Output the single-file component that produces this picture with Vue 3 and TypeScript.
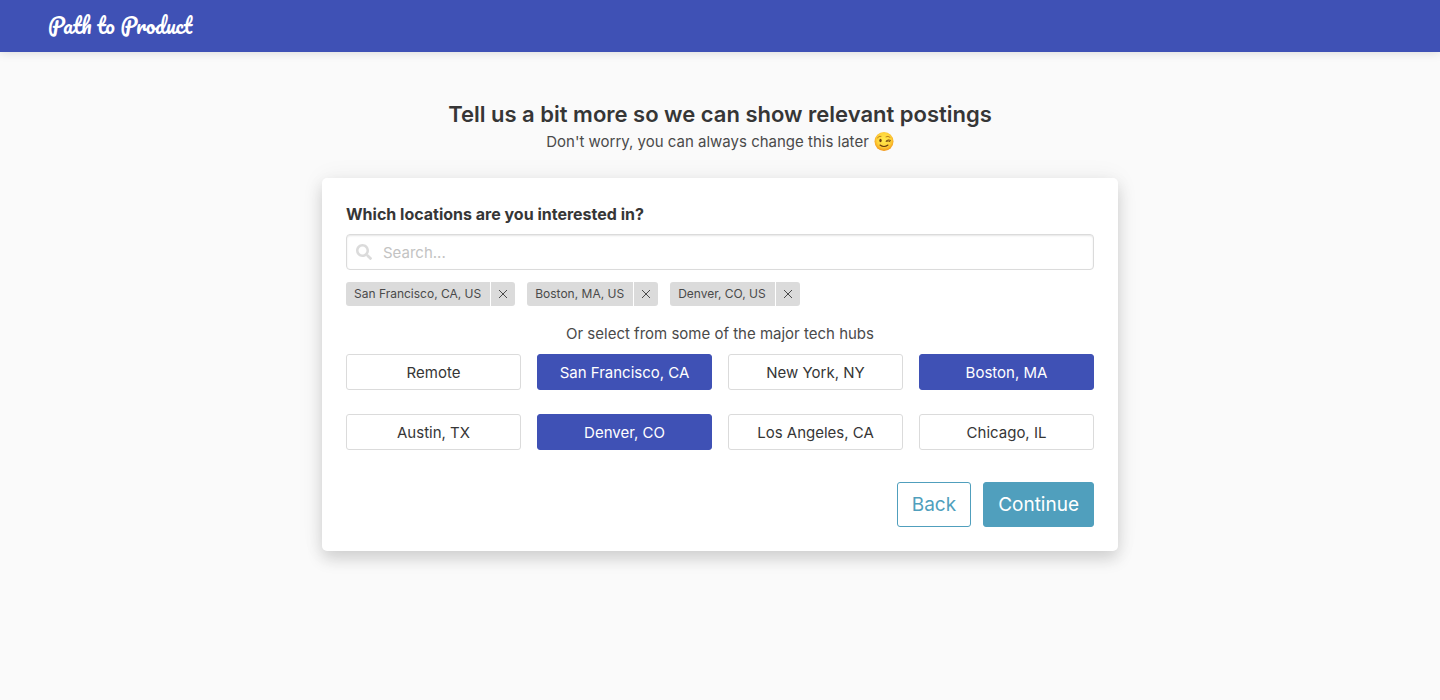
<script setup lang="ts">
import { computed, ref } from 'vue'

interface Place {
  name: string
  tag: string
}

const hubs: Place[] = [
  { name: 'Remote', tag: 'Remote' },
  { name: 'San Francisco, CA', tag: 'San Francisco, CA, US' },
  { name: 'New York, NY', tag: 'New York, NY, US' },
  { name: 'Boston, MA', tag: 'Boston, MA, US' },
  { name: 'Austin, TX', tag: 'Austin, TX, US' },
  { name: 'Denver, CO', tag: 'Denver, CO, US' },
  { name: 'Los Angeles, CA', tag: 'Los Angeles, CA, US' },
  { name: 'Chicago, IL', tag: 'Chicago, IL, US' },
]

const search = ref('')
const selected = ref<string[]>(['San Francisco, CA', 'Boston, MA', 'Denver, CO'])

const tags = computed(() =>
  selected.value.flatMap((name) => hubs.filter((hub) => hub.name === name)),
)

function toggle(name: string): void {
  selected.value = selected.value.includes(name)
    ? selected.value.filter((item) => item !== name)
    : [...selected.value, name]
}
</script>

<template>
  <div class="page">
    <header class="navbar">
      <a class="brand" href="#">Path to Product</a>
    </header>

    <main class="content">
      <h1 class="title">Tell us a bit more so we can show relevant postings</h1>
      <p class="subtitle">
        <span>Don't worry, you can always change this later</span>
        <svg class="wink" viewBox="0 0 40 40" role="img" aria-label="winking face">
          <defs>
            <radialGradient id="face" cx="50%" cy="42%" r="56%">
              <stop offset="0" stop-color="#ffe94e" />
              <stop offset="0.65" stop-color="#ffd43a" />
              <stop offset="1" stop-color="#f39a1c" />
            </radialGradient>
          </defs>
          <circle cx="20" cy="19" r="19" fill="url(#face)" />
          <ellipse cx="13" cy="17" rx="2.4" ry="3.4" fill="#6b3c0c" />
          <path d="M7 11.500Q10 7.500 14 8.500" fill="none" stroke="#a86a14" stroke-width="1.600" stroke-linecap="round" />
          <path d="M24 9.500Q28 7 32 10.500" fill="none" stroke="#a86a14" stroke-width="1.600" stroke-linecap="round" />
          <path d="M24 18Q28 14 33 16.500M25 18.500Q29 17 32 19" fill="none" stroke="#6b3c0c" stroke-width="1.800" stroke-linecap="round" />
          <path d="M12 26Q20 32 28 26" fill="none" stroke="#6b3c0c" stroke-width="2.200" stroke-linecap="round" />
        </svg>
      </p>

      <form class="card" @submit.prevent>
        <label class="label" for="location">Which locations are you interested in?</label>
        <div class="search">
          <svg class="search-icon" viewBox="0 0 512 512" aria-hidden="true">
            <path
              fill="currentColor"
              d="M505 442.700L405.300 343c-4.500-4.500-10.600-7-17-7H372c27.600-35.300 44-79.700 44-128C416 93.100 322.900 0 208 0S0 93.100 0 208s93.100 208 208 208c48.300 0 92.700-16.400 128-44v16.300c0 6.400 2.500 12.500 7 17l99.700 99.700c9.400 9.400 24.600 9.400 33.900 0l28.300-28.300c9.400-9.400 9.400-24.600.1-34zM208 336c-70.700 0-128-57.200-128-128 0-70.700 57.200-128 128-128 70.700 0 128 57.200 128 128 0 70.700-57.200 128-128 128z"
            />
          </svg>
          <input id="location" v-model="search" class="input" type="text" placeholder="Search..." />
        </div>

        <ul class="tags">
          <li v-for="place in tags" :key="place.name" class="tag-pair">
            <span class="tag">{{ place.tag }}</span>
            <button class="remove" type="button" :aria-label="`Remove ${place.tag}`" @click="toggle(place.name)">
              <svg viewBox="0 0 10 10" aria-hidden="true">
                <path d="M1 1L9 9M9 1L1 9" fill="none" stroke="currentColor" />
              </svg>
            </button>
          </li>
        </ul>

        <p class="hint">Or select from some of the major tech hubs</p>
        <div class="hubs">
          <button
            v-for="hub in hubs"
            :key="hub.name"
            class="hub"
            :class="{ active: selected.includes(hub.name) }"
            type="button"
            :aria-pressed="selected.includes(hub.name)"
            @click="toggle(hub.name)"
          >
            {{ hub.name }}
          </button>
        </div>

        <div class="actions">
          <button class="action outlined" type="button">Back</button>
          <button class="action" type="submit">Continue</button>
        </div>
      </form>
    </main>
  </div>
</template>

<style>
body {
  margin: 0;
  background: #fafafa;
}
</style>

<style scoped>
.page {
  min-height: 100vh;
  color: #4a4a4a;
  font-family: Inter, "Liberation Sans", sans-serif;
  font-size: 15px;
  line-height: 24px;
}

.page * {
  box-sizing: border-box;
}

button,
input {
  margin: 0;
  font-family: inherit;
  font-size: inherit;
}

button {
  cursor: pointer;
}

.navbar {
  display: flex;
  align-items: center;
  height: 52px;
  padding: 0 48px;
  background: #3f51b5;
  box-shadow: 0 0 10px rgba(10, 10, 10, 0.15);
}

.brand {
  color: #fff;
  font-family: Pacifico, cursive;
  font-size: 21px;
  line-height: 32px;
  text-decoration: none;
  white-space: nowrap;
}

.page .content {
  max-width: 796px;
  margin: 0 auto;
  padding: 48px 24px;
  box-sizing: content-box;
}

.title {
  margin: 0;
  color: #363636;
  font-size: 22px;
  font-weight: 600;
  line-height: 28px;
  text-align: center;
}

.subtitle {
  display: flex;
  align-items: center;
  justify-content: center;
  gap: 5px;
  margin: 2px 0 24px;
}

.wink {
  flex: none;
  width: 20px;
  height: 20px;
}

.card {
  padding: 24px;
  border-radius: 5px;
  background: #fff;
  box-shadow: 0 8px 16px rgba(10, 10, 10, 0.15), 0 0 24px rgba(10, 10, 10, 0.06);
}

.label {
  display: block;
  margin-bottom: 8px;
  color: #363636;
  font-size: 16px;
  font-weight: 700;
}

.search {
  position: relative;
}

.search-icon {
  position: absolute;
  top: 10px;
  left: 10px;
  width: 16px;
  height: 16px;
  color: #dbdbdb;
}

.input {
  display: block;
  width: 100%;
  height: 36px;
  padding: 0 12px 0 36px;
  border: 1px solid #dbdbdb;
  border-radius: 4px;
  background: #fff;
  box-shadow: inset 0 1px 2px rgba(10, 10, 10, 0.1);
  color: #363636;
}

.input::placeholder {
  color: #c3c3c3;
  opacity: 1;
}

.tags {
  display: flex;
  flex-wrap: wrap;
  gap: 12px;
  margin: 12px 0 16px;
  padding: 0;
  list-style: none;
}

.tag-pair {
  display: flex;
  gap: 1px;
  overflow: hidden;
  border-radius: 3px;
  font-size: 12px;
}

.tag {
  padding: 0 9px 0 8px;
  background: #dbdbdb;
}

.remove {
  display: grid;
  place-items: center;
  width: 24px;
  height: 24px;
  padding: 0;
  border: 0;
  background: #dbdbdb;
  color: #4a4a4a;
}

.remove svg {
  width: 10px;
  height: 10px;
}

.hint {
  margin: 0 0 8px;
  text-align: center;
}

.hubs {
  display: grid;
  grid-template-columns: repeat(4, 1fr);
  gap: 24px 16px;
}

.hub {
  height: 36px;
  padding: 0 8px;
  border: 1px solid #dbdbdb;
  border-radius: 3px;
  background: #fff;
  color: #363636;
}

.hub.active {
  border-color: #3f51b5;
  background: #3f51b5;
  color: #fff;
}

.actions {
  display: flex;
  justify-content: flex-end;
  gap: 12px;
  margin-top: 32px;
}

.action {
  height: 45px;
  padding: 0 14px;
  border: 1px solid #509fbd;
  border-radius: 3px;
  background: #509fbd;
  color: #fff;
  font-size: 19px;
}

.action.outlined {
  background: #fff;
  color: #509fbd;
}
</style>
